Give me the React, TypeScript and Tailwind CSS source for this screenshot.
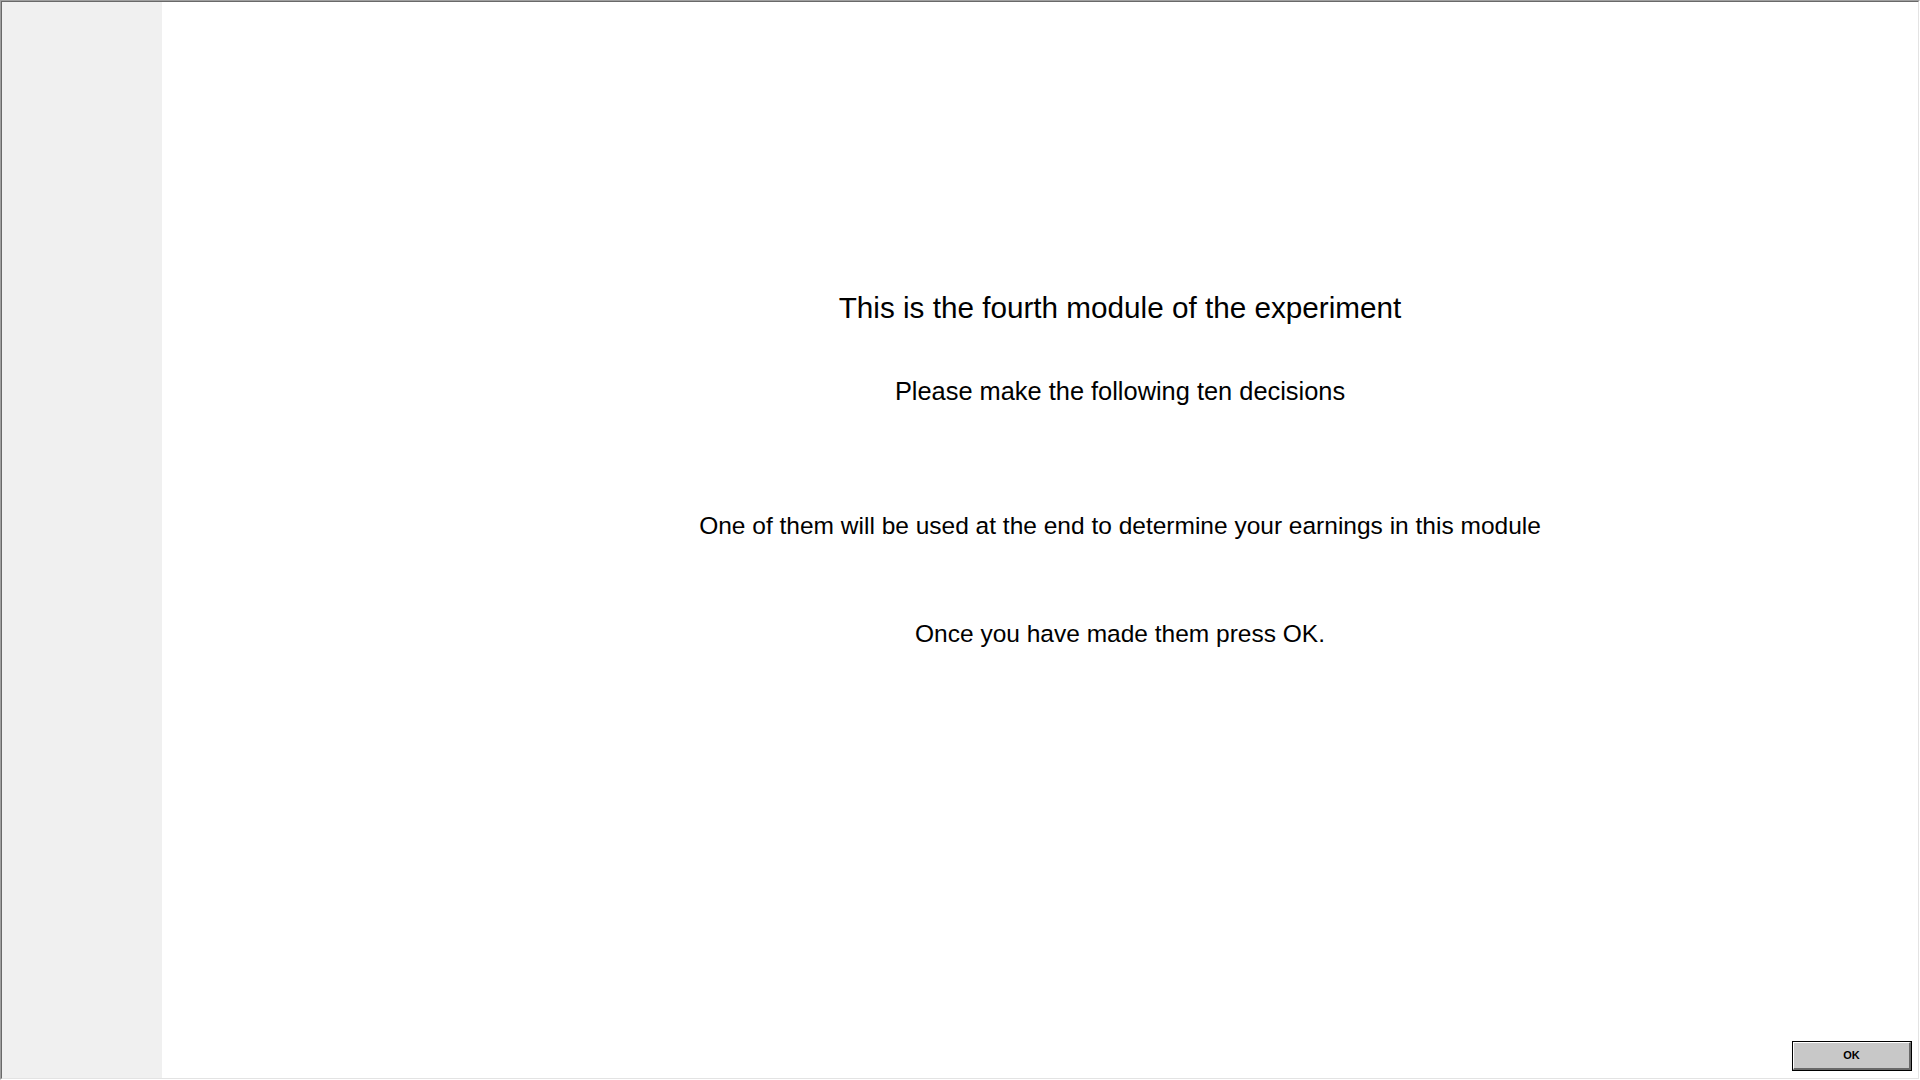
import React from "react";

export default function App() {
  return (
    <div
      className="w-[1920px] h-[1080px] bg-white overflow-hidden border-t border-l border-[#a0a0a0] border-r border-b border-r-white border-b-white"
      style={{ fontFamily: '"Liberation Sans", Arial, sans-serif' }}
    >
      <div className="w-full h-full flex border-t border-l border-[#696969] border-r border-b border-r-[#e3e3e3] border-b-[#e3e3e3]">
        <div className="w-[160px] shrink-0 bg-[#f0f0f0]" />
        <div className="flex-1 flex flex-col bg-white">
          <div className="flex flex-col items-center pl-[160px] pt-[289px] text-black">
            <div className="text-[29.7px] leading-[34px]">This is the fourth module of the experiment</div>
            <div className="mt-[51px] text-[25.4px] leading-[30px]">Please make the following ten decisions</div>
            <div className="mt-[105px] text-[24.5px] leading-[30px]">
              One of them will be used at the end to determine your earnings in this module
            </div>
            <div className="mt-[78px] text-[24.5px] leading-[30px]">Once you have made them press OK.</div>
          </div>
          <div className="mt-auto flex justify-end pr-[6px] pb-[7px]">
            <button className="w-[120px] h-[30px] border border-black bg-[#c8c8c8] flex">
              <span className="flex-1 h-full flex items-center justify-center border-t border-l border-white border-r-2 border-b-2 border-r-[#696969] border-b-[#696969] text-[11px] font-bold text-black">
                OK
              </span>
            </button>
          </div>
        </div>
      </div>
    </div>
  );
}
